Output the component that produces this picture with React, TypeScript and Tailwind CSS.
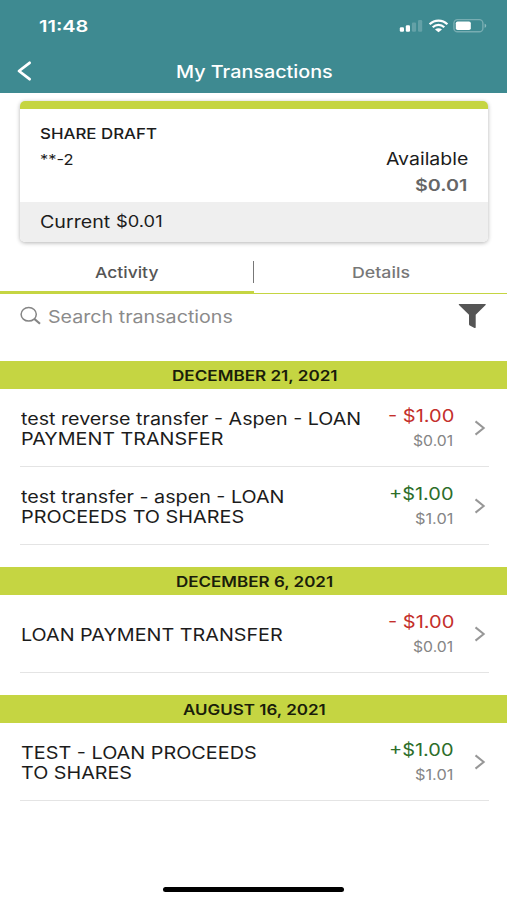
import { useLayoutEffect, useRef, useState } from "react";

type FitProps = { children: string; width: number; className?: string };

/** One line of wide-set text, stretched to span the given width. */
function Fit({ children, width, className = "" }: FitProps) {
  const ref = useRef<HTMLSpanElement>(null);
  const [ratio, setRatio] = useState(1.2);
  useLayoutEffect(() => {
    const natural = ref.current?.offsetWidth;
    if (natural) setRatio(width / natural);
  }, [children, width]);
  return (
    <span className={`block whitespace-nowrap ${className}`} style={{ width }}>
      <span ref={ref} className="inline-block origin-left align-top" style={{ transform: `scaleX(${ratio})` }}>
        {children}
      </span>
    </span>
  );
}

type Line = { text: string; width: number };
type Transaction = { lines: Line[]; amount: Line; credit: boolean; balance: Line };
type Group = { date: Line; items: Transaction[] };

const debit: Line = { text: "- $1.00", width: 66 };
const creditAmount: Line = { text: "+$1.00", width: 64.5 };
const oneCent: Line = { text: "$0.01", width: 40.5 };
const dollarOne: Line = { text: "$1.01", width: 38.5 };

const groups: Group[] = [
  {
    date: { text: "DECEMBER 21, 2021", width: 165 },
    items: [
      {
        lines: [
          { text: "test reverse transfer - Aspen - LOAN", width: 340 },
          { text: "PAYMENT TRANSFER", width: 202 },
        ],
        amount: debit,
        credit: false,
        balance: oneCent,
      },
      {
        lines: [
          { text: "test transfer - aspen - LOAN", width: 263.5 },
          { text: "PROCEEDS TO SHARES", width: 223 },
        ],
        amount: creditAmount,
        credit: true,
        balance: dollarOne,
      },
    ],
  },
  {
    date: { text: "DECEMBER 6, 2021", width: 157 },
    items: [
      {
        lines: [{ text: "LOAN PAYMENT TRANSFER", width: 261.5 }],
        amount: debit,
        credit: false,
        balance: oneCent,
      },
    ],
  },
  {
    date: { text: "AUGUST 16, 2021", width: 143 },
    items: [
      {
        lines: [
          { text: "TEST - LOAN PROCEEDS", width: 235.5 },
          { text: "TO SHARES", width: 111.5 },
        ],
        amount: creditAmount,
        credit: true,
        balance: dollarOne,
      },
    ],
  },
];

function StatusIcons() {
  return (
    <svg width="90" height="16" viewBox="0 0 90 16" className="block">
      <g fill="#fff">
        <rect x="0.8" y="9.3" width="4.2" height="4.4" rx="1.2" />
        <rect x="6.8" y="7.2" width="4.2" height="6.5" rx="1.2" />
        <rect x="12.9" y="4.6" width="4.2" height="9.1" rx="1.2" opacity="0.2" />
        <rect x="19" y="2" width="4.2" height="11.7" rx="1.2" opacity="0.2" />
      </g>
      <g fill="none" stroke="#fff" strokeWidth="2.2">
        <path d="M30.6 6.2C35.6 1.3 43.4 1.3 48.4 6.2" />
        <path d="M33.7 9.2C37 6.1 42 6.1 45.3 9.2" />
      </g>
      <path d="M36 11.4C38 9.7 41 9.7 43 11.4L39.5 14.2Z" fill="#fff" />
      <rect x="54.9" y="1.6" width="29" height="12.2" rx="3.6" fill="none" stroke="#fff" strokeOpacity="0.3" strokeWidth="1.4" />
      <rect x="56.8" y="3.4" width="15" height="8.6" rx="1.8" fill="#fff" />
      <path d="M85.6 5.8C87.8 6.6 87.8 9 85.6 9.8Z" fill="#fff" opacity="0.4" />
    </svg>
  );
}

function Row({ item }: { item: Transaction }) {
  return (
    <div className="ml-5 mr-[18px] flex h-[78px] items-center border-b border-[#e4e4e4] pt-px">
      <div className="flex-1 pl-[0.5px] pt-[2px] text-[17px] leading-5 text-[#1c1c1c]">
        {item.lines.map((line) => (
          <Fit key={line.text} width={line.width}>
            {line.text}
          </Fit>
        ))}
      </div>
      <div className="flex flex-col items-end">
        <Fit
          width={item.amount.width}
          className={item.credit ? "text-[17px] leading-6 text-[#2d6e2a]" : "text-[17px] leading-6 text-[#c4302b]"}
        >
          {item.amount.text}
        </Fit>
        <Fit width={item.balance.width} className="text-sm leading-[25px] text-[#858585]">
          {item.balance.text}
        </Fit>
      </div>
      <svg width="12" height="16" viewBox="0 0 12 16" className="ml-[20px] mr-[3.5px]" fill="none" stroke="#979797" strokeWidth="2">
        <path d="M1.5 1.4L9.7 8L1.5 14.6" />
      </svg>
    </div>
  );
}

export default function App() {
  return (
    <div className="flex h-[900px] w-[507px] flex-col overflow-hidden bg-white font-['Inter',sans-serif]">
      <header className="h-[93px] shrink-0 bg-[#3e8a91] text-white">
        <div className="flex h-[52px] items-center justify-between pl-[39px] pr-[18px]">
          <Fit width={50} className="text-base font-semibold leading-5">
            11:48
          </Fit>
          <StatusIcons />
        </div>
        <div className="grid h-[39px] grid-cols-[1fr_auto_1fr] items-center pl-4">
          <svg width="18" height="22" viewBox="0 0 18 22" className="mb-[2px]" fill="none" stroke="#fff" strokeWidth="2.8" strokeLinecap="round" strokeLinejoin="round">
            <path d="M13.6 2.8L3 11L13.6 19.2" />
          </svg>
          <Fit width={157} className="-ml-[15px] text-[17px] font-medium leading-6">
            My Transactions
          </Fit>
        </div>
      </header>

      <section className="mx-5 mt-2 flex h-[141px] w-[468px] shrink-0 flex-col overflow-hidden rounded-[5px] bg-white shadow-[0_1px_4px_rgba(0,0,0,0.3)]">
        <div className="h-2 shrink-0 bg-[#c5d542]" />
        <div className="flex flex-1 justify-between px-5 text-[#1c1c1c]">
          <div className="pt-[15px]">
            <Fit width={117.5} className="text-[14.5px] font-medium leading-5">
              SHARE DRAFT
            </Fit>
            <Fit width={34} className="mt-[6px] text-sm leading-5">
              **-2
            </Fit>
          </div>
          <div className="flex flex-col items-end pt-[38px]">
            <Fit width={82.5} className="text-[17px] leading-6">
              Available
            </Fit>
            <Fit width={53} className="mt-[2px] text-base font-semibold leading-6 text-[#666]">
              $0.01
            </Fit>
          </div>
        </div>
        <div className="flex h-10 shrink-0 items-center gap-[5px] bg-[#efefef] pl-5 text-[#1c1c1c]">
          <Fit width={70.5} className="text-[17px] leading-6">
            Current
          </Fit>
          <Fit width={46} className="text-[15.5px] leading-6">
            $0.01
          </Fit>
        </div>
      </section>

      <nav className="mt-2 flex h-11 shrink-0 text-[15px] font-medium leading-[45px]">
        <div className="flex w-[254px] justify-center border-b-[3px] border-[#c5d542] text-[#555]">
          <Fit width={64}>Activity</Fit>
        </div>
        <div className="flex flex-1 border-b border-b-[#c5d542] text-[#777]">
          <div className="-ml-[1.5px] mt-[11px] h-[22px] w-[1.5px] bg-[#777]" />
          <div className="flex flex-1 justify-center">
            <Fit width={58}>Details</Fit>
          </div>
        </div>
      </nav>

      <div className="flex h-[67px] shrink-0 items-start pl-5 pr-5">
        <svg width="22" height="20" viewBox="0 0 22 20" className="mt-3" fill="none" stroke="#858585">
          <ellipse cx="8.7" cy="8.3" rx="7.6" ry="6.8" strokeWidth="1.5" />
          <path d="M14.3 12.9L20 17.7" strokeWidth="2.1" />
        </svg>
        <Fit width={185} className="ml-[6px] mt-[11px] flex-1 text-[17px] leading-6 text-[#8b8b8b]">
          Search transactions
        </Fit>
        <svg width="29" height="26" viewBox="0 0 29 26" className="mt-[9px]">
          <path d="M1.2 1H27.3Q28.2 1.2 27.6 2L17.7 11.7V24.2Q17.5 25.5 16 24.8L11.8 22.5Q11 22 11 21V11.7L1 2Q0.3 1.2 1.2 1Z" fill="#555" />
        </svg>
      </div>

      {groups.map((group) => (
        <section key={group.date.text} className="mb-[22px] shrink-0">
          <h2 className="flex h-7 items-center justify-center bg-[#c5d542] pl-[1px] pt-[1px] text-[14.5px] font-semibold leading-5 text-[#1a1d0a]">
            <Fit width={group.date.width}>{group.date.text}</Fit>
          </h2>
          {group.items.map((item) => (
            <Row key={item.lines[0].text} item={item} />
          ))}
        </section>
      ))}

      <div className="mx-auto mb-2 mt-auto h-[5px] w-[181px] rounded-full bg-black" />
    </div>
  );
}
